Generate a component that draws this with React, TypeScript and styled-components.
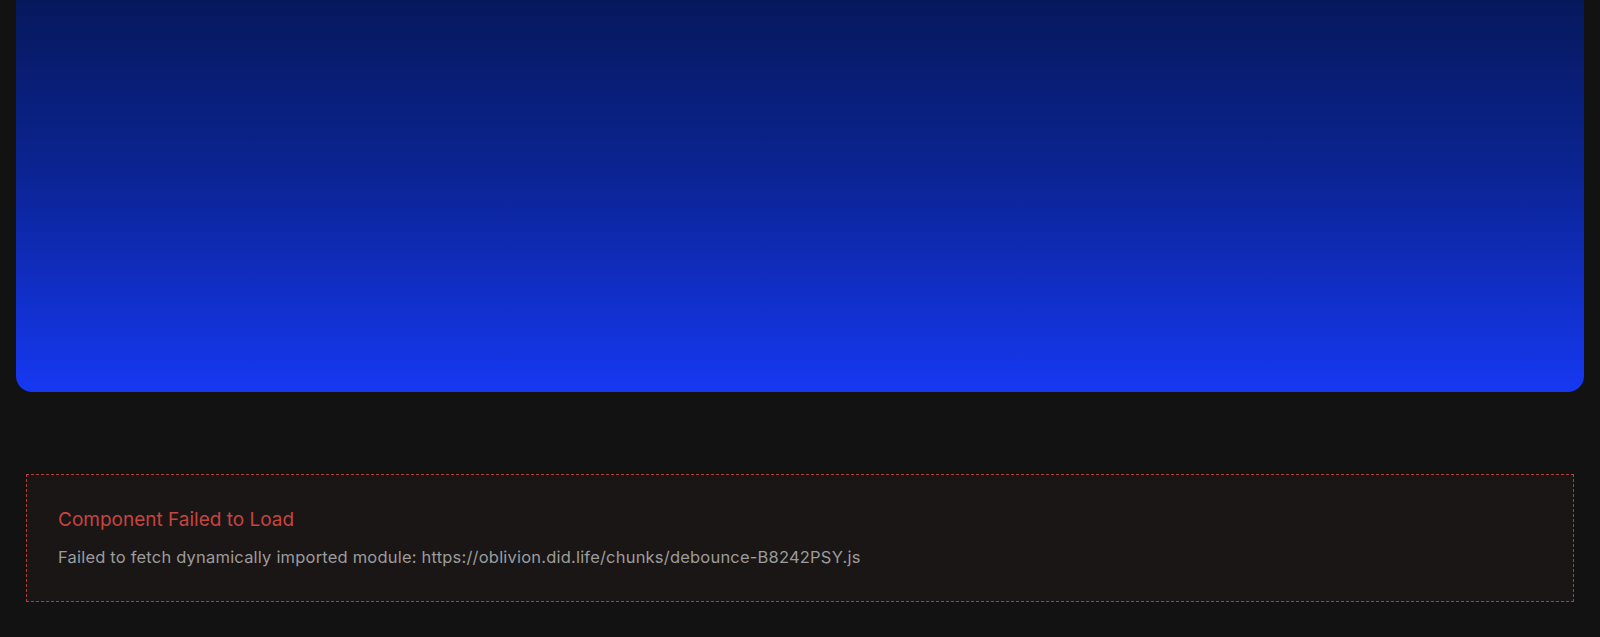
import React from 'react';
import styled, { createGlobalStyle } from 'styled-components';

const GlobalStyle = createGlobalStyle`
  html, body {
    margin: 0;
    padding: 0;
    background: #121212;
  }
  body {
    font-family: 'Inter', 'Noto Sans', sans-serif;
    overflow: hidden;
  }
`;

const Page = styled.div`
  width: 1600px;
  height: 637px;
  background: #121212;
  display: flex;
  flex-direction: column;
`;

const Hero = styled.div`
  margin: 0 16px;
  height: 392px;
  flex-shrink: 0;
  border-radius: 0 0 16px 16px;
  background: linear-gradient(180deg, #06185c 0%, #0b2494 45%, #1638f2 100%);
`;

const ErrorBox = styled.div`
  margin: 82px 26px 0;
  height: 128px;
  box-sizing: border-box;
  border: 1px dashed #b23c3a;
  background: #1a1616;
  padding: 34px 32px 0 31px;
  display: flex;
  flex-direction: column;
  gap: 16px;
`;

const ErrorTitle = styled.div`
  color: #c8443f;
  font-size: 19px;
  line-height: 22px;
`;

const ErrorMessage = styled.div`
  color: #9c9c9c;
  font-size: 16.5px;
  letter-spacing: 0.2px;
  line-height: 20px;
`;

export default function App() {
  return (
    <>
      <GlobalStyle />
      <Page>
        <Hero />
        <ErrorBox>
          <ErrorTitle>Component Failed to Load</ErrorTitle>
          <ErrorMessage>
            Failed to fetch dynamically imported module: https://oblivion.did.life/chunks/debounce-B8242PSY.js
          </ErrorMessage>
        </ErrorBox>
      </Page>
    </>
  );
}
